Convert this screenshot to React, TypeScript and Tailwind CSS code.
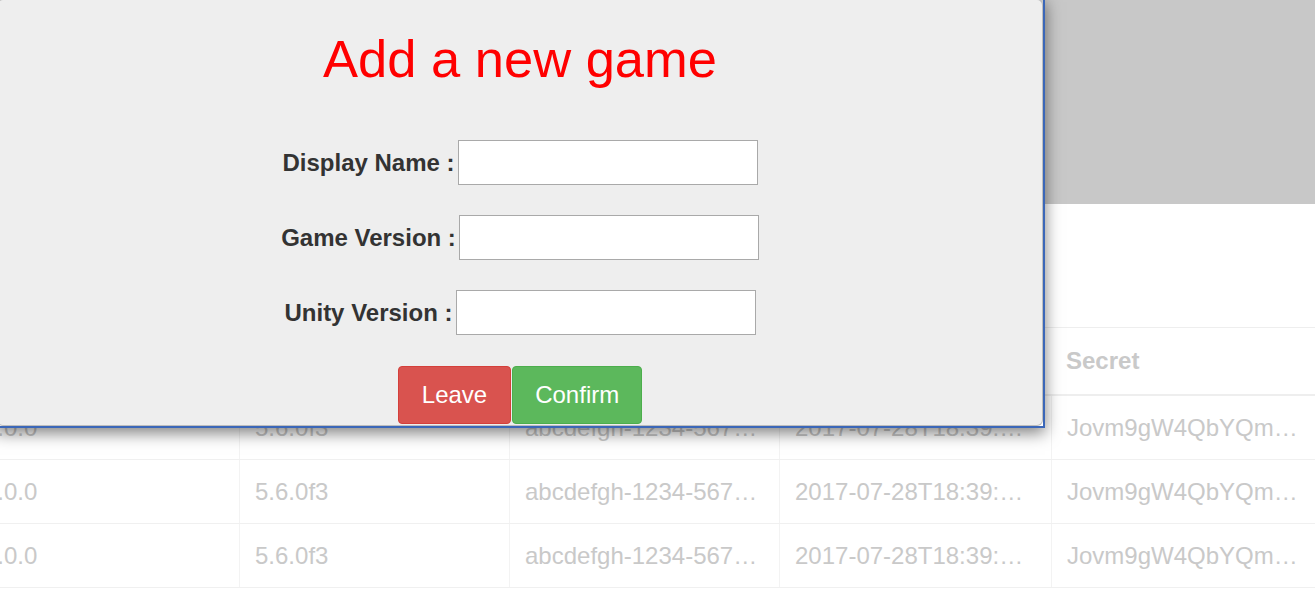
import React from "react";

const rows = [
  ["1.0.0", "5.6.0f3", "abcdefgh-1234-5678-90ab-cdefghijklmn", "2017-07-28T18:39:45.123Z", "Jovm9gW4QbYQmXk2LpR7sT"],
  ["1.0.0", "5.6.0f3", "abcdefgh-1234-5678-90ab-cdefghijklmn", "2017-07-28T18:39:45.123Z", "Jovm9gW4QbYQmXk2LpR7sT"],
  ["1.0.0", "5.6.0f3", "abcdefgh-1234-5678-90ab-cdefghijklmn", "2017-07-28T18:39:45.123Z", "Jovm9gW4QbYQmXk2LpR7sT"],
];

const headers = ["Version", "Unity Version", "Game Key", "Created At", "Secret"];

function Field({ label }: { label: string }) {
  return (
    <div className="flex items-center justify-center gap-[3px] h-[45px]">
      <label className="text-[24px] leading-[34px] font-bold text-[#333333]">{label}</label>
      <input
        type="text"
        className="w-[300px] h-[45px] border border-[#a9a9a9] bg-white outline-none"
      />
    </div>
  );
}

export default function App() {
  return (
    <div className="relative w-[1315px] h-[589px] overflow-hidden bg-white font-['Liberation_Sans',Arial,sans-serif]">
      <div className="h-[204px] bg-[#c8c8c8]" />
      <div className="mt-[123px] ml-[-31px] w-[1347px] text-[24px] leading-[34px] text-[#c9c9c9]">
        <div className="grid grid-cols-[270px_270px_270px_272px_1fr] h-[69px] border-t border-b-2 border-[#eeeeee] font-bold">
          {headers.map((h) => (
            <div key={h} className="flex items-center px-[15px] truncate">
              {h}
            </div>
          ))}
        </div>
        {rows.map((r, i) => (
          <div
            key={i}
            className="grid grid-cols-[270px_270px_270px_272px_1fr] h-[64px] border-b border-[#f0f0f0]"
          >
            {r.map((c, j) => (
              <div
                key={j}
                className={`flex items-center px-[15px] min-w-0 ${j > 0 ? "border-l border-[#f3f3f3]" : ""}`}
              >
                <span className="truncate block">{c}</span>
              </div>
            ))}
          </div>
        ))}
      </div>

      <div className="absolute left-[-5px] top-[-3px] w-[1050px] h-[431px] border-2 border-[#3b67b8] shadow-[0_5px_15px_rgba(0,0,0,0.5)]">
        <div className="h-full rounded-[6px] border border-black/20 bg-[#eeeeee] flex flex-col items-center">
          <h1 className="mt-[29px] text-[52.5px] leading-[60px] text-[#ff0000] font-normal">Add a new game</h1>
          <div className="mt-[51px] flex flex-col gap-[30px]">
            <Field label="Display Name :" />
            <Field label="Game Version :" />
            <Field label="Unity Version :" />
          </div>
          <div className="mt-[31px] flex gap-[1px]">
            <button className="text-[24px] leading-[34px] text-white py-[11px] px-[23px] border border-[#d43f3a] bg-[#d9534f] rounded-[4px]">
              Leave
            </button>
            <button className="text-[24px] leading-[34px] text-white py-[11px] px-[22px] border border-[#4cae4c] bg-[#5cb85c] rounded-[4px]">
              Confirm
            </button>
          </div>
        </div>
      </div>
    </div>
  );
}
